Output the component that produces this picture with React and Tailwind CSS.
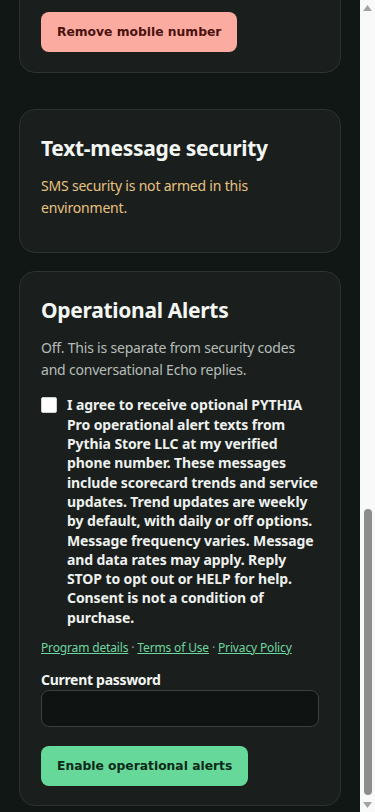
import React from "react";

const body = { fontFamily: '"Noto Sans", "Open Sans", Arial, sans-serif' };
const btn = { fontFamily: '"DejaVu Sans", Verdana, sans-serif' };

const consentLines = [
  "I agree to receive optional PYTHIA",
  "Pro operational alert texts from",
  "Pythia Store LLC at my verified",
  "phone number. These messages",
  "include scorecard trends and service",
  "updates. Trend updates are weekly",
  "by default, with daily or off options.",
  "Message frequency varies. Message",
  "and data rates may apply. Reply",
  "STOP to opt out or HELP for help.",
  "Consent is not a condition of",
  "purchase.",
];

export default function App() {
  return (
    <div className="flex h-[812px] w-[375px] overflow-hidden bg-[#111715]" style={body}>
      <div className="flex h-[812px] w-[360px] flex-col justify-end overflow-hidden px-[19px] pb-[6px]">
        {/* card 1 (partially visible) */}
        <div className="shrink-0 rounded-[16px] border border-[#2b322f] bg-[#1a1f1d] px-[21px] pt-[40px] pb-[20px]">
          <button className="flex h-[40px] items-center rounded-[8px] bg-[#fcaba0] px-[16px] text-[12.3px] font-bold text-[#4a1210]" style={btn}>
            Remove mobile number
          </button>
        </div>

        {/* card 2 */}
        <div className="mt-[36px] shrink-0 rounded-[16px] border border-[#2b322f] bg-[#1a1f1d] px-[21px] pt-[24px] pb-[33px]">
          <h2 className="text-[21px] font-bold leading-[28px] tracking-[-0.3px] text-[#f3f6f2]">Text-message security</h2>
          <p className="mt-[13px] text-[14px] leading-[22px] tracking-[-0.2px] text-[#e8c281]">
            SMS security is not armed in this
            <br />
            environment.
          </p>
        </div>

        {/* card 3 */}
        <div className="mt-[18px] shrink-0 rounded-[16px] border border-[#2b322f] bg-[#1a1f1d] px-[21px] pt-[24px] pb-[19px]">
          <h2 className="text-[21px] font-bold leading-[28px] tracking-[-0.3px] text-[#f3f6f2]">Operational Alerts</h2>
          <p className="mt-[13px] text-[14px] leading-[22px] tracking-[-0.2px] text-[#b6bdb9]">
            Off. This is separate from security codes
            <br />
            and conversational Echo replies.
          </p>
          <label className="mt-[14px] flex items-start gap-[10px]">
            <span className="mt-[2px] h-[16px] w-[16px] shrink-0 rounded-[2px] border border-[#d0d0d0] bg-white" />
            <span className="whitespace-nowrap text-[14px] font-bold leading-[19.3px] tracking-[-0.1px] text-[#eef1ee]">
              {consentLines.map((l, i) => (
                <span key={i} className="block">
                  {l}
                </span>
              ))}
            </span>
          </label>
          <div className="mt-[12px] whitespace-nowrap text-[12px] leading-[18px] tracking-[-0.15px] text-[#9aa19d]">
            <a className="text-[#6fd6a0] underline">Program details</a>
            {" · "}
            <a className="text-[#6fd6a0] underline">Terms of Use</a>
            {" · "}
            <a className="text-[#6fd6a0] underline">Privacy Policy</a>
          </div>
          <div className="mt-[14px] text-[14px] font-bold leading-[18px] tracking-[-0.3px] text-[#f3f6f2]">Current password</div>
          <div className="mt-[1px] h-[37px] w-[278px] rounded-[8px] border border-[#3a413e] bg-[#0f1412]" />
          <button className="mt-[19px] flex h-[40px] items-center rounded-[8px] bg-[#66d99a] px-[16px] text-[12.3px] font-bold text-[#0d2a18]" style={btn}>
            Enable operational alerts
          </button>
        </div>
      </div>

      {/* scrollbar */}
      <div className="flex h-[812px] w-[15px] flex-col items-center bg-[#f9f9f9]">
        <div className="flex h-[15px] w-full items-center justify-center">
          <svg width="9" height="6" viewBox="0 0 9 6"><path d="M4.5 0L9 6H0z" fill="#a3a3a3" /></svg>
        </div>
        <div className="flex w-full flex-1 flex-col items-center justify-end pb-[2px]">
          <div className="h-[286px] w-[8px] rounded-full bg-[#8c8c8c]" />
        </div>
        <div className="flex h-[15px] w-full items-center justify-center">
          <svg width="9" height="6" viewBox="0 0 9 6"><path d="M0 0H9L4.5 6z" fill="#a3a3a3" /></svg>
        </div>
      </div>
    </div>
  );
}
